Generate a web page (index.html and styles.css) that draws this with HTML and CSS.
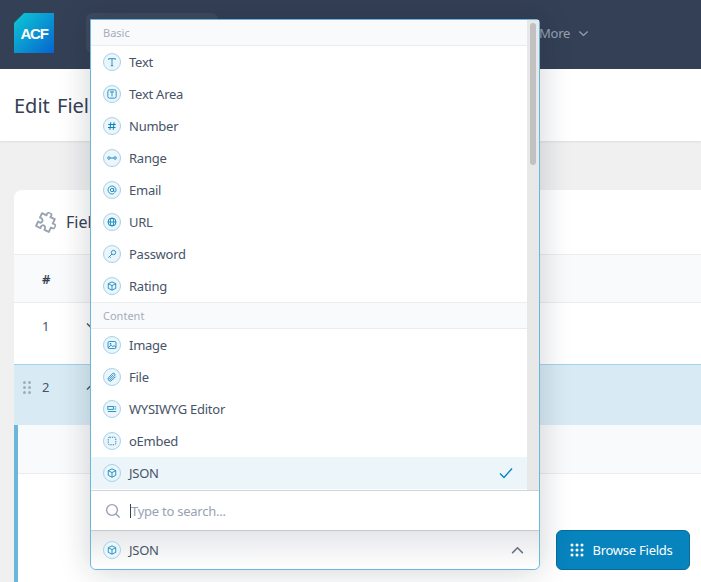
FILE: index.html
```html
<!DOCTYPE html>
<html lang="en">
<head>
    <meta charset="UTF-8">
    <title>Edit Field Group</title>
    <link rel="stylesheet" href="styles.css">
</head>
<body>
    <svg class="defs" width="0" height="0">
        <symbol id="i-box" viewBox="0 0 12 12"><path d="M6 1 10.5 3.2V8.8L6 11 1.5 8.8V3.2ZM1.5 3.2 6 5.5 10.5 3.2M6 5.5V11" fill="none" stroke="currentColor" stroke-width="1"/></symbol>
        <symbol id="i-text" viewBox="0 0 12 12"><path d="M2 3.5V2H10V3.5M6 2V10.5M4.5 10.5H7.5" fill="none" stroke="currentColor" stroke-width="1"/></symbol>
        <symbol id="i-area" viewBox="0 0 12 12"><rect x="1" y="1" width="10" height="10" rx="2" fill="none" stroke="currentColor" stroke-width="1"/><path d="M3.5 3.5H8.5M6 3.5V9" fill="none" stroke="currentColor" stroke-width="1"/></symbol>
        <symbol id="i-num" viewBox="0 0 12 12"><path d="M4.5 1.5 3.5 10.5M8.5 1.5 7.5 10.5M1.5 4.2H10.5M1.2 7.8H10.2" fill="none" stroke="currentColor" stroke-width="1.2"/></symbol>
        <symbol id="i-range" viewBox="0 0 12 12"><circle cx="2.3" cy="6" r="1.5" fill="none" stroke="currentColor" stroke-width="1"/><circle cx="9.7" cy="6" r="1.5" fill="none" stroke="currentColor" stroke-width="1"/><path d="M3.8 6H8.2" stroke="currentColor" stroke-width="1"/></symbol>
        <symbol id="i-mail" viewBox="0 0 12 12"><circle cx="6" cy="6" r="2" fill="none" stroke="currentColor" stroke-width="1"/><path d="M8 4V7A1.4 1.4 0 0 0 10.8 7V6A4.8 4.8 0 1 0 8.5 10.1" fill="none" stroke="currentColor" stroke-width="1"/></symbol>
        <symbol id="i-url" viewBox="0 0 12 12"><circle cx="6" cy="6" r="4.8" fill="none" stroke="currentColor" stroke-width="1.1"/><ellipse cx="6" cy="6" rx="2.1" ry="4.8" fill="none" stroke="currentColor" stroke-width="1"/><path d="M1.2 6H10.8" stroke="currentColor" stroke-width="1"/></symbol>
        <symbol id="i-key" viewBox="0 0 12 12"><circle cx="7.8" cy="4.2" r="2.6" fill="none" stroke="currentColor" stroke-width="1"/><path d="M6 6 1.6 10.4M3 9 4.3 10.3" fill="none" stroke="currentColor" stroke-width="1"/></symbol>
        <symbol id="i-image" viewBox="0 0 12 12"><rect x="1.2" y="1.8" width="9.6" height="8.4" rx="1.5" fill="none" stroke="currentColor" stroke-width="1"/><circle cx="4.2" cy="4.6" r="1" fill="currentColor"/><path d="M1.5 9 5 6.2 7 8 8.5 6.8 10.8 8.6" fill="none" stroke="currentColor" stroke-width="1"/></symbol>
        <symbol id="i-file" viewBox="0 0 12 12"><path d="M10.3 5.6 5.8 10.1A2.6 2.6 0 0 1 2.1 6.4L6.8 1.8A1.8 1.8 0 0 1 9.3 4.3L4.8 8.7A.9.9 0 0 1 3.5 7.4L7.7 3.3" fill="none" stroke="currentColor" stroke-width="1"/></symbol>
        <symbol id="i-editor" viewBox="0 0 12 12"><rect x="1" y="3" width="6.6" height="3.4" fill="none" stroke="currentColor" stroke-width="1"/><path d="M9 3.4H11M9 6H11M1 9H11" stroke="currentColor" stroke-width="1"/></symbol>
        <symbol id="i-embed" viewBox="0 0 12 12"><rect x="1.5" y="1.5" width="9" height="9" rx="1.5" fill="none" stroke="currentColor" stroke-width="1.1" stroke-dasharray="1.6 1.2"/></symbol>
    </svg>

    <header class="topbar">
        <div class="logo"><span>ACF</span></div>
        <div class="nav-pill"></div>
        <a class="nav-more">More
            <svg width="11" height="11" viewBox="0 0 12 12"><path d="M1.5 3.8 6 8.2 10.5 3.8" fill="none" stroke="currentColor" stroke-width="1.3"/></svg>
        </a>
    </header>

    <div class="titlebar">
        <h1>Edit Fiel</h1>
    </div>

    <main class="content">
        <section class="card">
            <div class="card-head">
                <svg class="puzzle" width="20" height="20" viewBox="1.5 1.5 17 17"><path d="M8 2.2C9.6 1.2 11.4 2.4 11 4.2L10.8 5H15V9.2L15.8 9C17.6 8.6 18.8 10.4 17.8 12 17.2 12.9 16.2 13.1 15 12.8V17H10.8C11.1 15.8 10.9 14.8 10 14.2 8.4 13.2 6.6 14.4 7 16.2L7.2 17H3V12.8L3.8 13C5.6 13.4 6.8 11.6 5.8 10 5.2 9.1 4.2 8.9 3 9.2V5H7.2C6.9 3.8 7.1 2.8 8 2.2Z" fill="none" stroke="#98a2b3" stroke-width="1.6" stroke-linejoin="round"/></svg>
                <h2>Fiel</h2>
            </div>
            <div class="row thead"><span class="cell-num">#</span></div>
            <div class="row field-row">
                <span class="cell-num">1</span>
                <svg class="toggle" width="12" height="8" viewBox="0 0 12 8"><path d="M1 1.5 6 6.5 11 1.5" fill="none" stroke="#475467" stroke-width="1.5"/></svg>
            </div>
            <div class="row field-row active">
                <span class="grip"><i></i><i></i><i></i><i></i><i></i><i></i></span>
                <span class="cell-num">2</span>
                <svg class="toggle" width="12" height="8" viewBox="0 0 12 8"><path d="M1 6.5 6 1.5 11 6.5" fill="none" stroke="#475467" stroke-width="1.5"/></svg>
            </div>
            <div class="settings">
                <div class="settings-tabs"></div>
                <div class="settings-body">
                    <button class="browse">
                        <svg width="14" height="14" viewBox="0 0 14 14" fill="#fff"><circle cx="2" cy="2" r="1.5"/><circle cx="7" cy="2" r="1.5"/><circle cx="12" cy="2" r="1.5"/><circle cx="2" cy="7" r="1.5"/><circle cx="7" cy="7" r="1.5"/><circle cx="12" cy="7" r="1.5"/><circle cx="2" cy="12" r="1.5"/><circle cx="7" cy="12" r="1.5"/><circle cx="12" cy="12" r="1.5"/></svg>
                        Browse Fields
                    </button>
                </div>
            </div>
        </section>
    </main>

    <!-- dropdown open over the page -->
    <div class="dropdown">
        <div class="results">
            <ul class="options">
                <li class="group">Basic</li>
                <li class="option"><span class="ficon"><svg><use href="#i-text"/></svg></span>Text</li>
                <li class="option"><span class="ficon"><svg><use href="#i-area"/></svg></span>Text Area</li>
                <li class="option"><span class="ficon"><svg><use href="#i-num"/></svg></span>Number</li>
                <li class="option"><span class="ficon"><svg><use href="#i-range"/></svg></span>Range</li>
                <li class="option"><span class="ficon"><svg><use href="#i-mail"/></svg></span>Email</li>
                <li class="option"><span class="ficon"><svg><use href="#i-url"/></svg></span>URL</li>
                <li class="option"><span class="ficon"><svg><use href="#i-key"/></svg></span>Password</li>
                <li class="option"><span class="ficon"><svg><use href="#i-box"/></svg></span>Rating</li>
                <li class="group second">Content</li>
                <li class="option"><span class="ficon"><svg><use href="#i-image"/></svg></span>Image</li>
                <li class="option"><span class="ficon"><svg><use href="#i-file"/></svg></span>File</li>
                <li class="option"><span class="ficon"><svg><use href="#i-editor"/></svg></span>WYSIWYG Editor</li>
                <li class="option"><span class="ficon"><svg><use href="#i-embed"/></svg></span>oEmbed</li>
                <li class="option selected"><span class="ficon"><svg><use href="#i-box"/></svg></span>JSON
                    <svg class="check" width="14" height="12" viewBox="0 0 14 12"><path d="M1 6.5 5 10.5 13 1.5" fill="none" stroke="#0783be" stroke-width="1.4"/></svg>
                </li>
            </ul>
            <div class="scrollbar"><div class="thumb"></div></div>
        </div>
        <div class="search">
            <svg width="16" height="16" viewBox="0 0 16 16"><circle cx="7" cy="7" r="5.4" fill="none" stroke="#98a2b3" stroke-width="1.4"/><path d="M11 11 14.6 14.6" stroke="#98a2b3" stroke-width="1.4"/></svg>
            <span class="caret-bar"></span><span class="placeholder">Type to search...</span>
        </div>
        <div class="current">
            <span class="ficon"><svg><use href="#i-box"/></svg></span>JSON
            <svg class="chev" width="13" height="8" viewBox="0 0 14 9"><path d="M1 8 7 2 13 8" fill="none" stroke="#667085" stroke-width="1.7"/></svg>
        </div>
    </div>
</body>
</html>
```

FILE: styles.css
```css
* {
    box-sizing: border-box;
}

body {
    margin: 0;
    width: 701px;
    height: 582px;
    overflow: hidden;
    position: relative;
    background: #f0f0f1;
    color: #344054;
    font-family: "Noto Sans", Arial, sans-serif;
    font-size: 13px;
    letter-spacing: -0.25px;
}

.defs {
    position: absolute;
}

/* Top navigation */
.topbar {
    height: 69px;
    background: #344055;
    display: flex;
    align-items: flex-start;
    padding: 13px 0 0 14px;
}

.logo {
    width: 40px;
    height: 40px;
    background: linear-gradient(135deg, #0ecad4, #0664d0);
    clip-path: polygon(10px 0, 100% 0, 100% 100%, 0 100%, 0 10px);
    display: flex;
    align-items: center;
    justify-content: center;
}

.logo span {
    color: #fff;
    font-family: "Liberation Sans", Arial, sans-serif;
    font-size: 15px;
    font-weight: bold;
    letter-spacing: -1.2px;
}

.nav-pill {
    width: 132px;
    height: 40px;
    margin-left: 32px;
    background: #3f4a5e;
    border-radius: 6px;
}

.nav-more {
    margin-left: 321px;
    height: 40px;
    display: flex;
    align-items: center;
    gap: 8px;
    color: #98a2b3;
    font-size: 13px;
}

/* Title */
.titlebar {
    height: 72px;
    background: #fff;
    padding: 0 14px;
    display: flex;
    align-items: center;
    box-shadow: 0 1px 2px rgba(0, 0, 0, 0.08);
}

h1 {
    margin: 0;
    font-size: 20px;
    font-weight: 400;
    letter-spacing: 0;
    word-spacing: 2px;
    white-space: nowrap;
}

/* Card */
.content {
    padding: 49px 0 0 14px;
}

.card {
    background: #fff;
    border-radius: 8px 0 0 0;
    height: 392px;
}

.card-head {
    height: 64px;
    padding-left: 23px;
    display: flex;
    align-items: center;
    gap: 9px;
}

.puzzle {
    transform: rotate(25deg);
}

h2 {
    margin: 0;
    font-size: 16px;
    font-weight: 400;
    letter-spacing: 0;
}

.row {
    display: flex;
    align-items: flex-start;
    position: relative;
    padding-left: 28px;
}

.thead {
    height: 49px;
    align-items: center;
    background: #f9fafb;
    border-top: 1px solid #eaecf0;
    border-bottom: 1px solid #eaecf0;
    font-weight: 600;
}

.field-row {
    height: 61px;
    padding-top: 14px;
    color: #475467;
}

.field-row.active {
    background: #d8ebf5;
    border-top: 1px solid #a5d3ea;
    padding-top: 13px;
}

.cell-num {
    width: 44px;
}

.toggle {
    margin-top: 5px;
}

.grip {
    position: absolute;
    left: 9px;
    top: 16px;
    width: 9px;
    display: grid;
    grid-template-columns: 3px 3px;
    gap: 2px 2px;
}

.grip i {
    width: 3px;
    height: 3px;
    border-radius: 50%;
    background: #a5adbb;
}

.settings {
    border-left: 4px solid #6cb5dc;
    height: 157px;
}

.settings-tabs {
    height: 49px;
    background: #f9fafb;
    border-bottom: 1px solid #eaecf0;
}

.settings-body {
    display: flex;
    justify-content: flex-end;
    padding: 56px 11px 0 0;
}

.browse {
    width: 134px;
    height: 40px;
    padding: 0 3px 0 0;
    display: flex;
    align-items: center;
    justify-content: center;
    gap: 8px;
    background: #0783be;
    border: 1px solid #066a9b;
    border-radius: 6px;
    color: #fff;
    font-family: inherit;
    font-size: 13px;
    letter-spacing: -0.25px;
}

/* Open select */
.dropdown {
    position: absolute;
    left: 90px;
    top: 19px;
    width: 450px;
    height: 551px;
    display: flex;
    flex-direction: column;
    background: #fff;
    border: 1px solid #6cb5dc;
    border-radius: 0 4px 6px 6px;
    box-shadow: 0 0 32px rgba(16, 24, 40, 0.2);
}

.results {
    height: 471px;
    display: flex;
    border-bottom: 1px solid #d0d5dd;
}

.options {
    flex: 1;
    margin: 0;
    padding: 0;
    list-style: none;
}

.group {
    height: 26px;
    padding-left: 12px;
    display: flex;
    align-items: center;
    background: #f9fafb;
    border-bottom: 1px solid #eaecf0;
    color: #a5adbb;
    font-size: 11px;
    letter-spacing: 0;
}

.group.second {
    border-top: 1px solid #eaecf0;
    height: 27px;
}

.option {
    height: 32px;
    padding-left: 12px;
    display: flex;
    align-items: center;
    color: #475467;
}

.option.selected {
    background: #ebf5fa;
}

.check {
    margin-left: auto;
    margin-right: 14px;
}

.ficon {
    width: 18px;
    height: 18px;
    margin-right: 8px;
    flex: none;
    border-radius: 50%;
    border: 1px solid #a5d3ea;
    background: #ebf5fa;
    color: #0783be;
    display: flex;
    align-items: center;
    justify-content: center;
}

.ficon svg {
    width: 10px;
    height: 10px;
}

.scrollbar {
    width: 12px;
    height: 470px;
    padding: 3px 3px;
    background: #e8e8e8;
}

.thumb {
    height: 142px;
    border-radius: 3px;
    background: #c1c1c1;
}

.search {
    height: 40px;
    padding-left: 14px;
    display: flex;
    align-items: center;
    border-bottom: 1px solid #c4c9d2;
}

.caret-bar {
    width: 1px;
    height: 14px;
    margin-left: 9px;
    background: #344054;
}

.placeholder {
    color: #98a2b3;
}

.current {
    flex: 1;
    padding: 0 15px 0 12px;
    display: flex;
    align-items: center;
    color: #475467;
    background: linear-gradient(#e6e7e9, #fff);
    border-radius: 0 0 6px 6px;
}

.chev {
    margin-left: auto;
}
```
